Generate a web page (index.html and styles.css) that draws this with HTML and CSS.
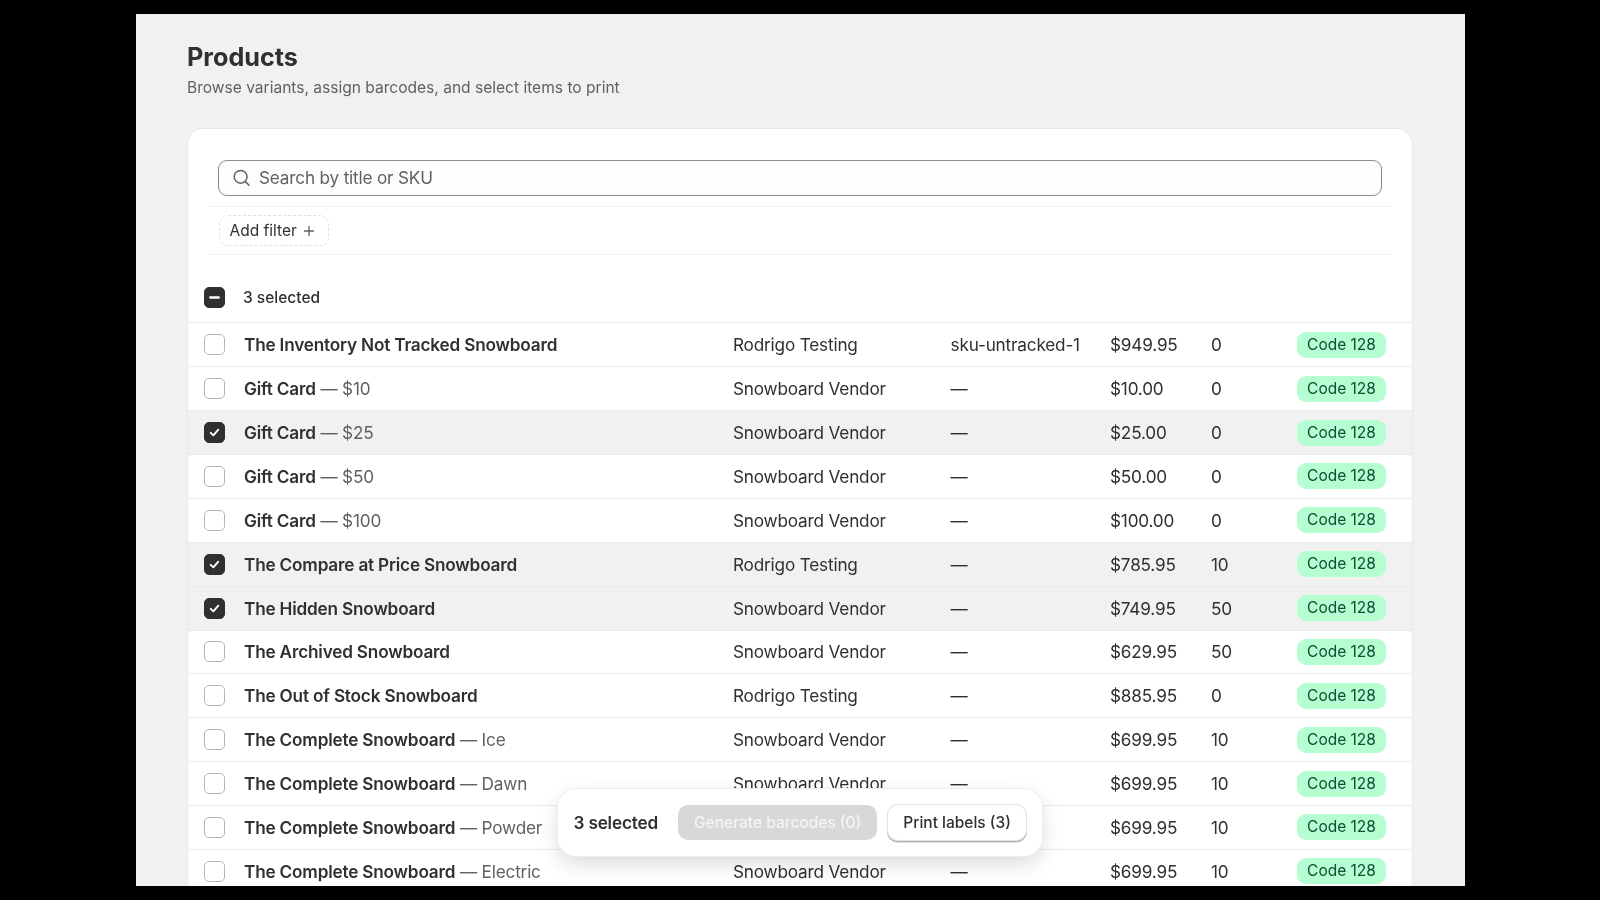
FILE: index.html
```html
<!DOCTYPE html>
<html lang="en">
<head>
<meta charset="utf-8">
<title>Products</title>
<link rel="stylesheet" href="styles.css">
</head>
<body>
<div class="frame">
  <main class="page">
    <header class="head">
      <h1>Products</h1>
      <p>Browse variants, assign barcodes, and select items to print</p>
    </header>
    <section class="card">
      <div class="tools">
        <div class="search-wrap">
          <div class="search">
            <svg class="search-icon" viewBox="0 0 20 20" fill="none" stroke="#616161" stroke-width="1.5" stroke-linecap="round"><circle cx="8.6" cy="8.8" r="6.4"/><path d="M13.2 13.4 17 17.2"/></svg>
            <span>Search by title or SKU</span>
          </div>
        </div>
        <div class="filters">
          <span class="chip">Add filter <svg class="plus" viewBox="0 0 12 12" fill="none" stroke="#616161" stroke-width="1.3" stroke-linecap="round"><path d="M6 1.5v9M1.5 6h9"/></svg></span>
        </div>
      </div>
      <div class="head-row">
        <span class="cb on"><svg viewBox="0 0 20 20" fill="none" stroke="#fff" stroke-width="2.4" stroke-linecap="round"><path d="M5.5 10h9"/></svg></span>
        <span class="count">3 selected</span>
      </div>
      <div class="row"><span class="cb"></span><span class="name"><b>The Inventory Not Tracked Snowboard</b></span><span>Rodrigo Testing</span><span>sku-untracked-1</span><span>$949.95</span><span>0</span><span class="badge">Code 128</span></div>
      <div class="row"><span class="cb"></span><span class="name"><b>Gift Card</b> — $10</span><span>Snowboard Vendor</span><span>—</span><span>$10.00</span><span>0</span><span class="badge">Code 128</span></div>
      <div class="row sel"><span class="cb on"><svg viewBox="0 0 20 20" fill="none" stroke="#fff" stroke-width="2" stroke-linecap="round" stroke-linejoin="round"><path d="M6 10.4 8.8 13 14 7"/></svg></span><span class="name"><b>Gift Card</b> — $25</span><span>Snowboard Vendor</span><span>—</span><span>$25.00</span><span>0</span><span class="badge">Code 128</span></div>
      <div class="row"><span class="cb"></span><span class="name"><b>Gift Card</b> — $50</span><span>Snowboard Vendor</span><span>—</span><span>$50.00</span><span>0</span><span class="badge">Code 128</span></div>
      <div class="row"><span class="cb"></span><span class="name"><b>Gift Card</b> — $100</span><span>Snowboard Vendor</span><span>—</span><span>$100.00</span><span>0</span><span class="badge">Code 128</span></div>
      <div class="row sel"><span class="cb on"><svg viewBox="0 0 20 20" fill="none" stroke="#fff" stroke-width="2" stroke-linecap="round" stroke-linejoin="round"><path d="M6 10.4 8.8 13 14 7"/></svg></span><span class="name"><b>The Compare at Price Snowboard</b></span><span>Rodrigo Testing</span><span>—</span><span>$785.95</span><span>10</span><span class="badge">Code 128</span></div>
      <div class="row sel"><span class="cb on"><svg viewBox="0 0 20 20" fill="none" stroke="#fff" stroke-width="2" stroke-linecap="round" stroke-linejoin="round"><path d="M6 10.4 8.8 13 14 7"/></svg></span><span class="name"><b>The Hidden Snowboard</b></span><span>Snowboard Vendor</span><span>—</span><span>$749.95</span><span>50</span><span class="badge">Code 128</span></div>
      <div class="row"><span class="cb"></span><span class="name"><b>The Archived Snowboard</b></span><span>Snowboard Vendor</span><span>—</span><span>$629.95</span><span>50</span><span class="badge">Code 128</span></div>
      <div class="row"><span class="cb"></span><span class="name"><b>The Out of Stock Snowboard</b></span><span>Rodrigo Testing</span><span>—</span><span>$885.95</span><span>0</span><span class="badge">Code 128</span></div>
      <div class="row"><span class="cb"></span><span class="name"><b>The Complete Snowboard</b> — Ice</span><span>Snowboard Vendor</span><span>—</span><span>$699.95</span><span>10</span><span class="badge">Code 128</span></div>
      <div class="row"><span class="cb"></span><span class="name"><b>The Complete Snowboard</b> — Dawn</span><span>Snowboard Vendor</span><span>—</span><span>$699.95</span><span>10</span><span class="badge">Code 128</span></div>
      <div class="row"><span class="cb"></span><span class="name"><b>The Complete Snowboard</b> — Powder</span><span>Snowboard Vendor</span><span>—</span><span>$699.95</span><span>10</span><span class="badge">Code 128</span></div>
      <div class="row"><span class="cb"></span><span class="name"><b>The Complete Snowboard</b> — Electric</span><span>Snowboard Vendor</span><span>—</span><span>$699.95</span><span>10</span><span class="badge">Code 128</span></div>
    </section>
  </main>
  <div class="bar">
    <span class="bar-count">3 selected</span>
    <button class="btn off">Generate barcodes (0)</button>
    <button class="btn">Print labels (3)</button>
  </div>
</div>
</body>
</html>
```
FILE: styles.css
```css
* { box-sizing: border-box; }
html, body { margin: 0; height: 900px; overflow: hidden; background: #000; }
body { padding: 14px 135px 14px 136px; font-family: Inter, "Liberation Sans", sans-serif; color: #303030; }
.frame { position: relative; height: 872px; overflow: hidden; background: #f1f1f1; filter: blur(0.5px); }
.page { padding: 29px 53px 0 52px; }
.head { margin-left: -1px; }
.head h1 { margin: 0; font-size: 25.2px; line-height: 28px; font-weight: 650; color: #303030; }
.head p { margin: 6px 0 0; font-size: 15.55px; line-height: 22px; color: #616161; }
.card { margin-top: 30px; background: #fff; border-radius: 15px; box-shadow: 0 0 0 1px #e8e8e8, 0 1px 1px rgba(0,0,0,.06); overflow: hidden; }
.tools { padding: 0 20px; }
.search-wrap { padding: 31px 10px 10px; border-bottom: 1.5px solid #f1f1f1; }
.search { height: 36px; display: flex; align-items: center; gap: 7px; padding: 0 14px 1px 13px; border: 1.5px solid #8a8a8a; border-radius: 9px; background: #fdfdfd; font-size: 17.2px; letter-spacing: -.19px; color: #616161; }
.search-icon { width: 20px; height: 20px; flex: none; margin-top: 1px; }
.filters { padding: 8px 10.5px; border-bottom: 1.5px solid #f1f1f1; }
.chip { display: inline-flex; align-items: center; gap: 6px; height: 31px; width: 110px; padding: 0 10px; border: 1px dashed #e0e0e0; border-radius: 9px; font-size: 15.5px; color: #303030; }
.plus { width: 12px; height: 12px; }
.head-row { height: 68.4px; padding: 18px 16px 0; display: flex; align-items: center; gap: 18px; border-bottom: 1.5px solid #ebebeb; font-size: 15.5px; font-weight: 500; }
.cb { width: 21px; height: 21px; flex: none; border: 1.3px solid #b5b5b5; border-radius: 5px; background: #fff; display: block; }
.cb.on { background: #303030; border-color: #303030; }
.cb svg { display: block; width: 100%; height: 100%; }
.row { height: 43.88px; padding-left: 16px; display: grid; grid-template-columns: 40px 489px 217.5px 159.5px 101px 86px 89px; align-items: center; border-bottom: 1.5px solid #ebebeb; font-size: 17.2px; letter-spacing: -.19px; color: #303030; white-space: nowrap; }
.row.sel { background: #f1f1f1; }
.name { color: #616161; }
.name b { font-weight: 600; color: #303030; }
.badge { height: 26px; line-height: 26px; text-align: center; border-radius: 9px; background: #b4fed2; color: #0c5132; font-size: 15.5px; letter-spacing: 0; }
.bar { position: absolute; left: 421.5px; top: 775px; width: 484.5px; height: 67px; display: flex; align-items: center; gap: 11px; padding: 0 15px 0 16px; background: #fff; border-radius: 18px; box-shadow: 0 0 0 1px #eee, 0 8px 20px rgba(0,0,0,.14); }
.bar-count { font-size: 17.2px; letter-spacing: -.19px; font-weight: 600; white-space: nowrap; margin-right: 9px; }
.btn { height: 35px; padding: 0 15px; margin: 0; border: 0; border-radius: 10px; background: #fff; font: 500 15.5px Inter, "Liberation Sans", sans-serif; color: #303030; white-space: nowrap; box-shadow: 0 0 0 1px #e3e3e3, 0 1.5px 0 1px #b5b5b5; }
.btn.off { background: #d8d8d8; color: #f4f4f4; box-shadow: none; padding: 0 16px; }
```
